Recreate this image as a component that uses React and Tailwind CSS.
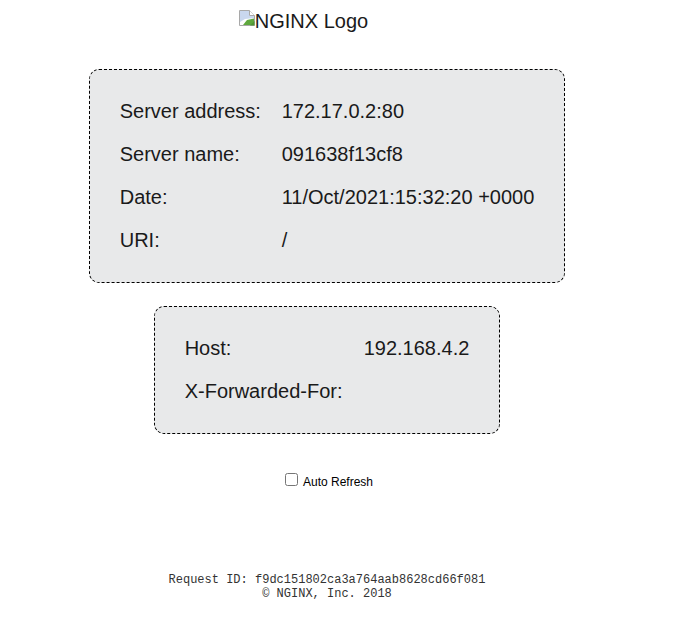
const font = { fontFamily: '"Liberation Sans", Arial, sans-serif' };

const InfoBox = ({ rows, labelWidth }) => (
    <div className="mx-auto w-fit rounded-[10px] border border-dashed border-black bg-[#e8e9ea] px-[30px] py-5">
        {rows.map(([label, value]) => (
            <div key={label} className="flex h-[43px] items-center text-[20px] leading-[23px] text-[#1a1a1a]">
                <span className={labelWidth}>{label}</span>
                <span>{value}</span>
            </div>
        ))}
    </div>
);

// chrome's broken image glyph
const BrokenImage = () => (
    <svg width="16" height="16" viewBox="0 0 16 16" className="mb-[8px] shrink-0">
        <path d="M0.5 0.5H10.5L15.5 5.5V15.5H0.5Z" fill="#fff" stroke="#a8a8a8" />
        <path d="M1 1H10V6H15V8L6 9L1 12Z" fill="#c9d7ee" />
        <path d="M10.5 0.5V5.5H15.5" fill="#fff" stroke="#a8a8a8" />
        <path d="M4 15L8 10L15 8.5V15Z" fill="#5fa83e" />
        <path d="M15.5 11V15.5H11Z" fill="#4f9632" />
    </svg>
);

export default function App() {
    return (
        <div className="h-[628px] w-[654px] bg-white pt-[10px] text-black" style={font}>
            <div className="flex h-[23px] items-center justify-center pr-[47px] text-[20px] leading-[23px] text-[#1a1a1a]">
                <BrokenImage />
                <span>NGINX Logo</span>
            </div>

            <div className="mt-[36px]">
                <InfoBox
                    labelWidth="w-[162px]"
                    rows={[
                        ["Server address:", "172.17.0.2:80"],
                        ["Server name:", "091638f13cf8"],
                        ["Date:", "11/Oct/2021:15:32:20 +0000"],
                        ["URI:", "/"],
                    ]}
                />
            </div>

            <div className="mt-[23px]">
                <InfoBox
                    labelWidth="w-[179px]"
                    rows={[
                        ["Host:", "192.168.4.2"],
                        ["X-Forwarded-For:", ""],
                    ]}
                />
            </div>

            <div className="mt-[39px] flex items-center justify-center pl-[4px] text-[12px] leading-[14px]">
                <input type="checkbox" className="mb-[3px] mr-[5px] h-[13px] w-[13px] appearance-auto" />
                <span className="mt-[2px]">Auto Refresh</span>
            </div>

            <div className="mt-[84px] text-center text-[12px] leading-[14px] text-[#333]" style={{ fontFamily: '"Liberation Mono", "Courier New", monospace' }}>
                <div>Request ID: f9dc151802ca3a764aab8628cd66f081</div>
                <div>© NGINX, Inc. 2018</div>
            </div>
        </div>
    );
}
